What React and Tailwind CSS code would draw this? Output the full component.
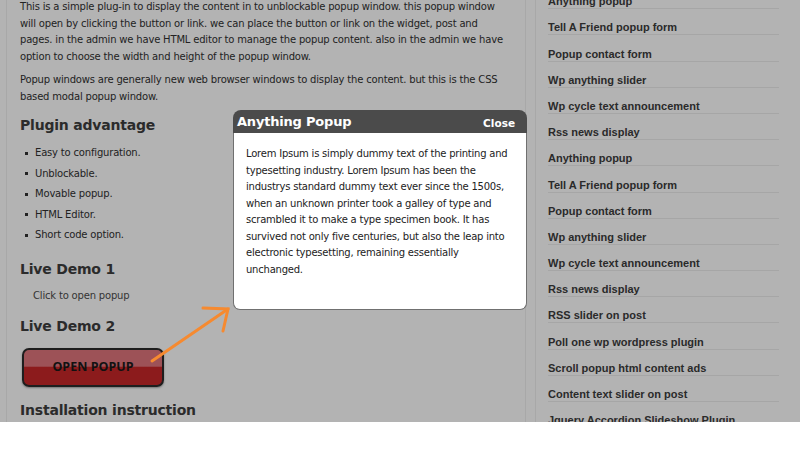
import React from "react";

const sidebarLinks = [
  "Anything popup",
  "Tell A Friend popup form",
  "Popup contact form",
  "Wp anything slider",
  "Wp cycle text announcement",
  "Rss news display",
  "Anything popup",
  "Tell A Friend popup form",
  "Popup contact form",
  "Wp anything slider",
  "Wp cycle text announcement",
  "Rss news display",
  "RSS slider on post",
  "Poll one wp wordpress plugin",
  "Scroll popup html content ads",
  "Content text slider on post",
  "Jquery Accordion Slideshow Plugin",
];

const advantages = [
  "Easy to configuration.",
  "Unblockable.",
  "Movable popup.",
  "HTML Editor.",
  "Short code option.",
];

const introLines = [
  "This is a simple plug-in to display the content in to unblockable popup window. this popup window",
  "will open by clicking the button or link. we can place the button or link on the widget, post and",
  "pages. in the admin we have HTML editor to manage the popup content. also in the admin we have",
  "option to choose the width and height of the popup window.",
];

const popupLines = [
  "Lorem Ipsum is simply dummy text of the printing and",
  "typesetting industry. Lorem Ipsum has been the",
  "industrys standard dummy text ever since the 1500s,",
  "when an unknown printer took a galley of type and",
  "scrambled it to make a type specimen book. It has",
  "survived not only five centuries, but also the leap into",
  "electronic typesetting, remaining essentially",
  "unchanged.",
];

const App = () => {
  return (
    <div className="h-[461px] w-[800px] overflow-hidden bg-white">
      <div className="relative flex h-[422px] overflow-hidden bg-[#b3b3b3]">
        {/* main column */}
        <div className="ml-[6px] w-[520px] shrink-0 border-l border-r border-[#a8a8a8] pl-[13px] font-['DejaVu_Sans',sans-serif] text-[#222]">
          <p className="mt-[-1px] text-[10px] leading-[16.5px] tracking-[-0.18px]">
            {introLines.map((line) => (
              <span key={line} className="block whitespace-nowrap">
                {line}
              </span>
            ))}
          </p>
          <p className="mt-[7px] text-[10px] leading-[16.5px] tracking-[-0.18px]">
            <span className="block whitespace-nowrap">
              Popup windows are generally new web browser windows to display the content. but this is the CSS
            </span>
            <span className="block">based modal popup window.</span>
          </p>

          <h2 className="mt-[11px] text-[14px] font-bold leading-[18px] tracking-[-0.2px] text-[#2b2b2b]">
            Plugin advantage
          </h2>
          <ul className="mt-[9px]">
            {advantages.map((item) => (
              <li key={item} className="flex items-center text-[10px] leading-[20.5px] tracking-[-0.18px]">
                <span className="ml-[5px] mr-[7px] h-[3px] w-[3px] bg-[#222]" />
                {item}
              </li>
            ))}
          </ul>

          <h2 className="mt-[14px] text-[14px] font-bold leading-[18px] tracking-[-0.2px] text-[#2b2b2b]">
            Live Demo 1
          </h2>
          <p className="ml-[13px] mt-[10.75px] text-[10px] leading-[16.5px] tracking-[-0.18px] text-[#333]">
            Click to open popup
          </p>

          <h2 className="mt-[11.75px] text-[14px] font-bold leading-[18px] tracking-[-0.2px] text-[#2b2b2b]">
            Live Demo 2
          </h2>
          <button className="ml-[2px] mt-[13px] flex h-[39px] w-[142px] items-center justify-center rounded-[7px] border-2 border-[#1e1e1e] bg-[linear-gradient(to_bottom,#9d5257_0%,#9d5257_46%,#8c1b1c_50%,#8c1b1c_100%)] font-['Open_Sans',sans-serif] text-[12.5px] font-bold text-[#111] shadow-[0_1px_2px_rgba(0,0,0,0.35)]">
            OPEN POPUP
          </button>

          <h2 className="mt-[14px] text-[14px] font-bold leading-[18px] tracking-[-0.2px] text-[#2b2b2b]">
            Installation instruction
          </h2>
        </div>

        {/* sidebar */}
        <div className="ml-[9px] flex-1 border-l border-[#a8a8a8] pl-[12px]">
          <ul className="mt-[-17px] w-[231px] font-['Liberation_Sans',Arial,sans-serif] text-[11px] font-bold text-[#2a2a2a]">
            {sidebarLinks.map((link, i) => (
              <li
                key={i}
                className="whitespace-nowrap border-b border-[#a6a6a6] pt-[12.2px] leading-[13px]"
              >
                {link}
              </li>
            ))}
          </ul>
        </div>

        {/* popup */}
        <div className="absolute left-[233px] top-[110px] w-[294px] font-['DejaVu_Sans',sans-serif]">
          <div className="flex h-[23px] items-center justify-between rounded-t-[8px] bg-[#4b4b4b] pl-[4px] pr-[12px]">
            <span className="text-[13px] font-bold tracking-[-0.2px] text-white">Anything Popup</span>
            <span className="mt-[4px] text-[10.5px] font-bold text-white">Close</span>
          </div>
          <div className="h-[177px] rounded-b-[7px] border border-t-0 border-[#707070] bg-white pl-[12px] pt-[13px] text-[10px] leading-[16.5px] tracking-[-0.22px] text-[#222]">
            {popupLines.map((line) => (
              <span key={line} className="block whitespace-nowrap">
                {line}
              </span>
            ))}
          </div>
        </div>

        {/* arrow */}
        <svg
          className="absolute left-[148px] top-[304px]"
          width="84"
          height="62"
          viewBox="0 0 84 62"
          fill="none"
          stroke="#f68a30"
          strokeWidth="3"
          strokeLinecap="round"
        >
          <path d="M4 57 L80 5" />
          <path d="M55 4 L80 5 L75 27" />
        </svg>
      </div>
    </div>
  );
};

export default App;
